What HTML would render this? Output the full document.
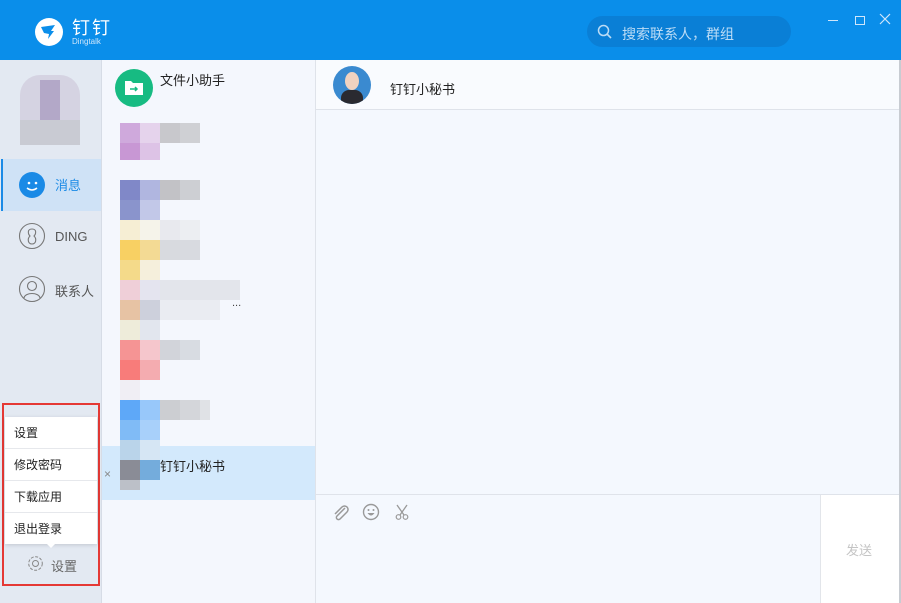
<!DOCTYPE html>
<html><head><meta charset="utf-8"><style>
*{margin:0;padding:0;box-sizing:border-box}
body{width:901px;height:603px;overflow:hidden;background:#fff;font-family:"Liberation Sans","Noto Sans CJK SC",sans-serif;position:relative}
.a{position:absolute}
.b{position:absolute;width:20px;height:20px}
</style></head><body>
<div class="a" style="left:0;top:0;width:901px;height:60px;background:#0a8eea"></div>
<div class="a" style="left:35px;top:18px;width:28px;height:28px;border-radius:50%;background:#fff"></div>
<svg class="a" style="left:38px;top:22px" width="22" height="20" viewBox="0 0 22 20"><path d="M3 5 L17 3 L13 9 L16 9 L10 17 L11 12 L6 11 Z" fill="#0a8eea"/></svg>
<div class="a" style="left:72px;top:14px;color:#fff;font-size:18px;letter-spacing:2px">钉钉</div>
<div class="a" style="left:72px;top:37px;color:#cfe6fb;font-size:8px">Dingtalk</div>
<div class="a" style="left:587px;top:16px;width:204px;height:31px;border-radius:16px;background:#0a7fd6"></div>
<svg class="a" style="left:597px;top:24px" width="16" height="16" viewBox="0 0 16 16"><circle cx="6.5" cy="6.5" r="5" fill="none" stroke="#bcdcf6" stroke-width="1.5"/><path d="M10 10 L14 14" stroke="#bcdcf6" stroke-width="1.6"/></svg>
<div class="a" style="left:622px;top:24px;color:#bcdcf6;font-size:14px">搜索联系人，群组</div>
<div class="a" style="left:828px;top:20px;width:10px;height:1px;background:#cfe6fb"></div>
<div class="a" style="left:855px;top:16px;width:10px;height:9px;border:1px solid #cfe6fb"></div>
<svg class="a" style="left:879px;top:13px" width="12" height="12"><path d="M1 1L11 11M11 1L1 11" stroke="#cfe6fb" stroke-width="1.2"/></svg>

<div class="a" style="left:0;top:60px;width:102px;height:543px;background:#e3e9f2;border-right:1px solid #d6dce6"></div>
<div class="a" style="left:20px;top:75px;width:60px;height:70px;background:#d5d3e2;border-radius:20px"></div>
<div class="a" style="left:40px;top:80px;width:20px;height:40px;background:#b3a8c8"></div>
<div class="a" style="left:20px;top:120px;width:60px;height:25px;background:#c9cbd3"></div>
<div class="a" style="left:1px;top:159px;width:100px;height:52px;background:#cfe2f6"></div>
<div class="a" style="left:1px;top:159px;width:2px;height:52px;background:#1a8ae6"></div>
<div class="a" style="left:19px;top:172px;width:26px;height:26px;border-radius:50%;background:#1a8ae6"></div>
<svg class="a" style="left:19px;top:172px" width="26" height="26"><circle cx="10" cy="11" r="1.3" fill="#fff"/><circle cx="17" cy="11" r="1.3" fill="#fff"/><path d="M8 16 Q13 20 18 16" stroke="#fff" stroke-width="1.5" fill="none"/></svg>
<div class="a" style="left:55px;top:175px;color:#1a8ae6;font-size:13px">消息</div>
<svg class="a" style="left:18px;top:222px" width="28" height="28"><circle cx="14" cy="14" r="12.5" fill="none" stroke="#777" stroke-width="1.1"/><path d="M14 7 C9 7 10 12 12 14 C9 17 10 22 14 22 C18 22 19 17 16 14 C18 12 19 7 14 7Z" fill="none" stroke="#777" stroke-width="1.1"/></svg>
<div class="a" style="left:55px;top:229px;color:#555;font-size:13px">DING</div>
<svg class="a" style="left:18px;top:275px" width="28" height="28"><circle cx="14" cy="14" r="12.5" fill="none" stroke="#777" stroke-width="1.1"/><circle cx="14" cy="11" r="4.5" fill="none" stroke="#777" stroke-width="1.1"/><path d="M6 23 C7 17 21 17 22 23" fill="none" stroke="#777" stroke-width="1.1"/></svg>
<div class="a" style="left:55px;top:281px;color:#555;font-size:13px">联系人</div>

<div class="a" style="left:2px;top:403px;width:98px;height:183px;border:2px solid #e53935"></div>
<div class="a" style="left:5px;top:417px;width:92px;height:127px;background:#fff;box-shadow:0 1px 4px rgba(0,0,0,.15)"></div>
<div class="a" style="left:14px;top:424px;font-size:12px;color:#222">设置</div>
<div class="a" style="left:5px;top:448px;width:92px;height:1px;background:#e6e8ec"></div>
<div class="a" style="left:14px;top:456px;font-size:12px;color:#222">修改密码</div>
<div class="a" style="left:5px;top:480px;width:92px;height:1px;background:#e6e8ec"></div>
<div class="a" style="left:14px;top:488px;font-size:12px;color:#222">下载应用</div>
<div class="a" style="left:5px;top:512px;width:92px;height:1px;background:#e6e8ec"></div>
<div class="a" style="left:14px;top:520px;font-size:12px;color:#222">退出登录</div>
<div class="a" style="left:46px;top:543px;width:0;height:0;border:5px solid transparent;border-top-color:#fff"></div>
<svg class="a" style="left:27px;top:555px" width="17" height="17"><circle cx="8.5" cy="8.5" r="3" fill="none" stroke="#888"/><circle cx="8.5" cy="8.5" r="6.8" fill="none" stroke="#888" stroke-dasharray="3 1.5"/></svg>
<div class="a" style="left:51px;top:556px;font-size:13px;color:#666">设置</div>

<div class="a" style="left:102px;top:60px;width:214px;height:543px;background:#f4f7fd;border-right:1px solid #dfe3ea"></div>
<div class="a" style="left:115px;top:69px;width:38px;height:38px;border-radius:50%;background:#17bb82"></div>
<svg class="a" style="left:124px;top:79px" width="20" height="17"><path d="M1 2 H7 L9 4 H19 V16 H1Z" fill="#fff"/><path d="M6 10 H13 M11 8 L13 10 L11 12" stroke="#17bb82" stroke-width="1.5" fill="none"/></svg>
<div class="a" style="left:160px;top:70px;font-size:13px;color:#222">文件小助手</div>
<div class="a" style="left:102px;top:446px;width:213px;height:54px;background:#d3e9fc"></div>
<div class="a" style="left:104px;top:467px;font-size:12px;color:#888">×</div>
<div class="a" style="left:160px;top:456px;font-size:13px;color:#222">钉钉小秘书</div>
<div class="a" style="left:232px;top:297px;font-size:11px;color:#444">...</div>

<div class="b" style="left:120px;top:123px;background:#cfa9dc"></div><div class="b" style="left:140px;top:123px;background:#e5d3ec"></div><div class="b" style="left:160px;top:123px;background:#c8c8cc"></div><div class="b" style="left:180px;top:123px;background:#cfd0d4"></div>
<div class="b" style="left:120px;top:143px;height:17px;background:#c897d4"></div><div class="b" style="left:140px;top:143px;height:17px;background:#ddc3e6"></div>
<div class="b" style="left:120px;top:180px;background:#8088c8"></div><div class="b" style="left:140px;top:180px;background:#b0b6e0"></div><div class="b" style="left:160px;top:180px;background:#c2c2c6"></div><div class="b" style="left:180px;top:180px;background:#cdcfd3"></div>
<div class="b" style="left:120px;top:200px;background:#8a94cc"></div><div class="b" style="left:140px;top:200px;background:#c2c8e8"></div>
<div class="b" style="left:120px;top:220px;background:#f6eed4"></div><div class="b" style="left:140px;top:220px;background:#f5f3ea"></div><div class="b" style="left:160px;top:220px;background:#e8e9ee"></div><div class="b" style="left:180px;top:220px;background:#eceef2"></div>
<div class="b" style="left:120px;top:240px;background:#f8d063"></div><div class="b" style="left:140px;top:240px;background:#f3da94"></div><div class="b" style="left:160px;top:240px;background:#d8dadf"></div><div class="b" style="left:180px;top:240px;background:#d8dae0"></div>
<div class="b" style="left:120px;top:260px;background:#f4da8a"></div><div class="b" style="left:140px;top:260px;background:#f5efdc"></div>
<div class="b" style="left:120px;top:280px;background:#efcfd8"></div><div class="b" style="left:140px;top:280px;background:#e4e4ef"></div><div class="b" style="left:160px;top:280px;width:80px;background:#e3e5eb"></div>
<div class="b" style="left:120px;top:300px;background:#e7c3a4"></div><div class="b" style="left:140px;top:300px;background:#cdd0dc"></div><div class="b" style="left:160px;top:300px;width:60px;background:#eaecf2"></div>
<div class="b" style="left:120px;top:320px;background:#eeecda"></div><div class="b" style="left:140px;top:320px;background:#e2e6ee"></div>
<div class="b" style="left:120px;top:340px;background:#f59494"></div><div class="b" style="left:140px;top:340px;background:#f5c6cc"></div><div class="b" style="left:160px;top:340px;background:#d2d4da"></div><div class="b" style="left:180px;top:340px;background:#d8dce2"></div>
<div class="b" style="left:120px;top:360px;background:#f87c7a"></div><div class="b" style="left:140px;top:360px;background:#f4acb0"></div>
<div class="b" style="left:120px;top:380px;background:#f0eef4"></div>
<div class="b" style="left:120px;top:400px;background:#5ea8f8"></div><div class="b" style="left:140px;top:400px;background:#98c8fa"></div><div class="b" style="left:160px;top:400px;background:#ccced2"></div><div class="b" style="left:180px;top:400px;background:#d4d6da"></div><div class="b" style="left:200px;top:400px;width:10px;background:#e0e2e6"></div>
<div class="b" style="left:120px;top:420px;background:#80bbf6"></div><div class="b" style="left:140px;top:420px;background:#a8d0fa"></div>
<div class="b" style="left:120px;top:440px;background:#bad4ea"></div><div class="b" style="left:140px;top:440px;background:#d6e6f4"></div>
<div class="b" style="left:120px;top:460px;background:#8a8c96"></div><div class="b" style="left:140px;top:460px;background:#74acdc"></div>
<div class="b" style="left:120px;top:480px;height:10px;background:#bcc0c8"></div>

<div class="a" style="left:316px;top:60px;width:585px;height:543px;background:#f4f8fe"></div>
<div class="a" style="left:316px;top:60px;width:585px;height:50px;background:#f9fbfe;border-bottom:1px solid #dfe3ea"></div>
<div class="a" style="left:333px;top:66px;width:38px;height:38px;border-radius:50%;background:#3a8ad0;overflow:hidden"><div class="a" style="left:12px;top:6px;width:14px;height:18px;border-radius:50%;background:#f1d2c0"></div><div class="a" style="left:8px;top:24px;width:22px;height:16px;background:#2a2a30;border-radius:8px 8px 0 0"></div></div>
<div class="a" style="left:390px;top:79px;font-size:13px;color:#222">钉钉小秘书</div>
<div class="a" style="left:316px;top:494px;width:585px;height:1px;background:#dfe3ea"></div>
<div class="a" style="left:820px;top:495px;width:81px;height:108px;background:#fff;border-left:1px solid #e2e5ea"></div>
<div class="a" style="left:846px;top:540px;font-size:13px;color:#c4c4c4">发送</div>
<svg class="a" style="left:332px;top:504px" width="18" height="18"><path d="M13 4 L5 12 A2 2 0 0 0 8 15 L15 8 A3.5 3.5 0 0 0 10 3 L3 10" fill="none" stroke="#999" stroke-width="1.5"/></svg>
<svg class="a" style="left:362px;top:503px" width="18" height="18"><circle cx="9" cy="9" r="7.5" fill="none" stroke="#999" stroke-width="1.4"/><circle cx="6.5" cy="7" r="1" fill="#999"/><circle cx="11.5" cy="7" r="1" fill="#999"/><path d="M5.5 10 H12.5 Q9 15 5.5 10Z" fill="#999"/></svg>
<svg class="a" style="left:393px;top:503px" width="18" height="18"><path d="M4 2 L11 12 M14 2 L7 12" stroke="#999" stroke-width="1.3"/><circle cx="5.5" cy="14" r="2.3" fill="none" stroke="#999" stroke-width="1.2"/><circle cx="12.5" cy="14" r="2.3" fill="none" stroke="#999" stroke-width="1.2"/></svg>
<div class="a" style="left:899px;top:60px;width:2px;height:543px;background:#c8ccd2"></div>
</body></html>
